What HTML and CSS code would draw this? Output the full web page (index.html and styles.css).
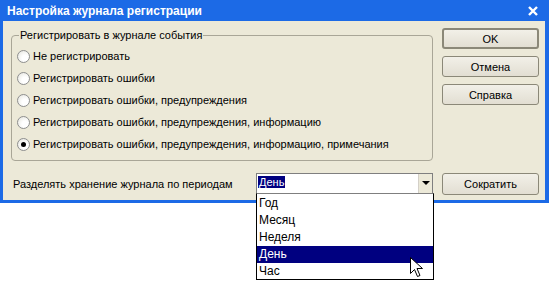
FILE: index.html
```html
<!DOCTYPE html>
<html lang="ru">
<head>
    <meta charset="UTF-8">
    <title>Настройка журнала регистрации</title>
    <link rel="stylesheet" href="styles.css">
</head>
<body>

    <div class="window">
        <div class="titlebar">
            <span class="title">Настройка журнала регистрации</span>
            <svg class="close" width="10" height="10" viewBox="0 0 10 10">
                <path d="M1 1 L9 9 M9 1 L1 9" stroke="#fff" stroke-width="2.4"/>
            </svg>
        </div>

        <div class="client">
            <div class="main-row">
                <fieldset class="group">
                    <legend>Регистрировать в журнале события</legend>
                    <label class="radio"><span class="dot"></span>Не регистрировать</label>
                    <label class="radio"><span class="dot"></span>Регистрировать ошибки</label>
                    <label class="radio"><span class="dot"></span>Регистрировать ошибки, предупреждения</label>
                    <label class="radio"><span class="dot"></span>Регистрировать ошибки, предупреждения, информацию</label>
                    <label class="radio checked"><span class="dot"></span>Регистрировать ошибки, предупреждения, информацию, примечания</label>
                </fieldset>

                <div class="buttons">
                    <button class="btn default">OK</button>
                    <button class="btn">Отмена</button>
                    <button class="btn">Справка</button>
                </div>
            </div>

            <div class="period-row">
                <span class="period-label">Разделять хранение журнала по периодам</span>
                <div class="combo">
                    <span class="combo-value"><span class="sel">День</span></span>
                    <span class="combo-arrow"></span>
                </div>
                <button class="btn">Сократить</button>
            </div>
        </div>
    </div>

    <ul class="dropdown">
        <li>Год</li>
        <li>Месяц</li>
        <li>Неделя</li>
        <li class="active">День</li>
        <li>Час</li>
    </ul>

    <!-- mouse pointer over the list -->
    <svg class="pointer" width="14" height="22" viewBox="0 0 14 22">
        <path d="M0.5 0.5 L0.5 16.5 L4.5 12.5 L7.5 19.5 L10 18.5 L7 11.5 L12.5 11.5 Z" fill="#fff" stroke="#000" stroke-width="1"/>
    </svg>

</body>
</html>
```

FILE: styles.css
```css
body {
    margin: 0;
    padding: 0;
    background-color: #fff;
    font-family: "Liberation Sans", Arial, sans-serif;
    font-size: 11px;
    color: #000;
    width: 549px;
    height: 281px;
    position: relative;
    overflow: hidden;
}

.window {
    width: 549px;
    height: 203px;
    box-sizing: border-box;
    background-color: #1c6ae6;
    padding: 0 4px 3px 3px;
    display: flex;
    flex-direction: column;
}

.titlebar {
    height: 21px;
    display: flex;
    align-items: center;
    justify-content: space-between;
    padding: 0 7px 0 4px;
}

.title {
    color: #fff;
    font-weight: bold;
    font-size: 12px;
}

.client {
    flex: 1;
    background-color: #ece9d8;
    padding: 7px 6px 0 8px;
}

.main-row {
    display: flex;
    align-items: flex-start;
}

.group {
    width: 422px;
    height: 133px;
    box-sizing: border-box;
    margin: 0;
    padding: 3px 0 0 5px;
    border: 1px solid #a9a697;
    border-radius: 4px;
}

.group legend {
    padding: 0 1px;
    margin-left: 2px;
    line-height: 14px;
}

.radio {
    height: 22px;
    display: flex;
    align-items: center;
    gap: 3px;
}

.dot {
    width: 11px;
    height: 11px;
    border: 1px solid #8e8f8f;
    border-radius: 50%;
    background: radial-gradient(circle at 65% 65%, #fff 30%, #e2e2db 100%);
    display: flex;
    align-items: center;
    justify-content: center;
}

.radio.checked .dot::after {
    content: "";
    width: 5px;
    height: 5px;
    border-radius: 50%;
    background-color: #000;
}

.buttons {
    margin-left: 9px;
    display: flex;
    flex-direction: column;
    gap: 7px;
}

.btn {
    width: 97px;
    height: 22px;
    box-sizing: border-box;
    font-family: inherit;
    font-size: 11px;
    color: #000;
    border: 1px solid #8b8878;
    border-radius: 3px;
    background: linear-gradient(#f2f0e8, #e2ded2);
    padding: 0;
}

.buttons .btn {
    height: 21px;
}

.btn.default {
    border: 2px solid #8b8878;
}

.period-row {
    margin-top: 12px;
    display: flex;
    align-items: center;
    padding-left: 2px;
}

.period-label {
    width: 243px;
}

.combo {
    width: 177px;
    height: 21px;
    box-sizing: border-box;
    border: 1px solid #7f7f7f;
    background-color: #fff;
    display: flex;
    margin-right: 9px;
    margin-top: -2px;
}

.combo-value {
    flex: 1;
    padding: 2px 0 0 1px;
}

.sel {
    background-color: #000080;
    color: #fff;
    padding: 0 1px;
}

.combo-arrow {
    width: 13px;
    border-left: 1px solid #d4d0c8;
    background-color: #ece9d8;
    position: relative;
}

.combo-arrow::after {
    content: "";
    position: absolute;
    left: 3px;
    top: 7px;
    border-left: 4px solid transparent;
    border-right: 4px solid transparent;
    border-top: 4px solid #000;
}

.dropdown {
    position: absolute;
    left: 256px;
    top: 193px;
    width: 178px;
    height: 87px;
    box-sizing: border-box;
    margin: 0;
    padding: 1px 0 0;
    list-style: none;
    background-color: #fff;
    border: 1px solid #000;
    border-top-color: #7f7f7f;
}

.dropdown li {
    height: 17px;
    line-height: 17px;
    padding-left: 2px;
    font-size: 12px;
}

.dropdown li.active {
    background-color: #000080;
    color: #fff;
}

.pointer {
    position: absolute;
    left: 410px;
    top: 257px;
}
```
